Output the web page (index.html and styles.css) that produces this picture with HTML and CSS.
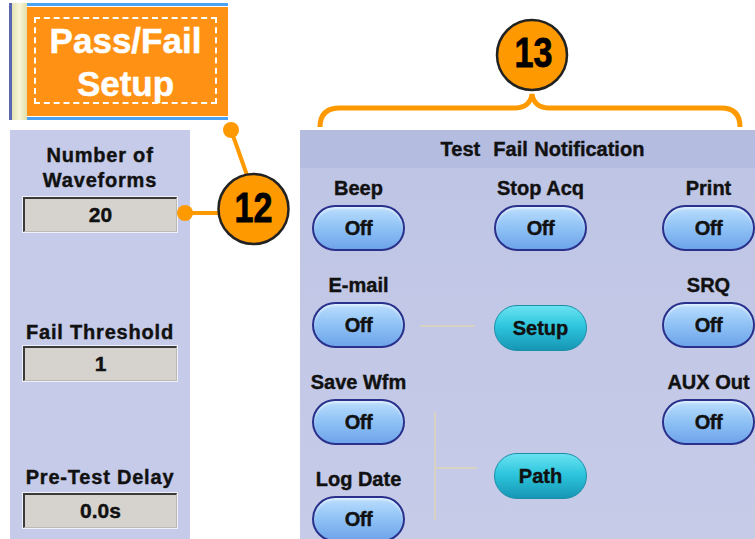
FILE: index.html
```html
<!DOCTYPE html>
<html lang="en">
<head>
  <meta charset="UTF-8">
  <title>Pass/Fail Setup</title>
  <link rel="stylesheet" href="styles.css">
</head>
<body>

  <div class="screen">
    <div class="top">
      <div class="tab">
        <span class="tab-edge"></span>
        <span class="tab-grip"></span>
        <div class="tab-face">
          <div class="tab-orange">
            <div class="tab-dash">Pass/Fail<br>Setup</div>
          </div>
        </div>
      </div>
    </div>

    <div class="main">
      <div class="limits">
        <div class="group">
          <div class="label">Number of<br>Waveforms</div>
          <div class="field"><span class="field-value">20</span></div>
        </div>
        <div class="group group-mid">
          <div class="label">Fail Threshold</div>
          <div class="field field-flush"><span class="field-value">1</span></div>
        </div>
        <div class="group group-last">
          <div class="label">Pre-Test Delay</div>
          <div class="field field-low"><span class="field-value">0.0s</span></div>
        </div>
      </div>

      <div class="notify">
        <div class="notify-head">Test&nbsp; Fail Notification</div>
        <div class="notify-grid">
          <div class="cell c1 r1"><span class="cell-label">Beep</span><span class="pill">Off</span></div>
          <div class="cell c3 r1"><span class="cell-label">Stop Acq</span><span class="pill">Off</span></div>
          <div class="cell c5 r1"><span class="cell-label">Print</span><span class="pill">Off</span></div>

          <div class="cell c1 r2"><span class="cell-label">E-mail</span><span class="pill">Off</span></div>
          <div class="link c2 r2"></div>
          <div class="cell cell-setup c3 r2"><span class="pill pill-teal">Setup</span></div>
          <div class="cell c5 r2"><span class="cell-label">SRQ</span><span class="pill">Off</span></div>

          <div class="cell c1 r3"><span class="cell-label">Save Wfm</span><span class="pill">Off</span></div>
          <div class="tree c2 r34"></div>
          <div class="cell cell-path c3 r34"><span class="pill pill-teal">Path</span></div>
          <div class="cell c5 r3"><span class="cell-label">AUX Out</span><span class="pill">Off</span></div>

          <div class="cell c1 r4"><span class="cell-label">Log Date</span><span class="pill">Off</span></div>
        </div>
      </div>
    </div>

    <!-- callouts drawn over the panels -->
    <svg class="callouts" width="755" height="539" viewBox="0 0 755 539">
      <g fill="#ff9900" stroke="#ff9900">
        <line x1="231" y1="130" x2="248" y2="178" stroke-width="4"/>
        <line x1="185" y1="213" x2="222" y2="213" stroke-width="4"/>
        <circle cx="231" cy="130" r="8" stroke="none"/>
        <circle cx="185" cy="213" r="8" stroke="none"/>
        <path d="M320,127 Q320,108 340,108 L514,108 Q530,108 532,94 Q534,108 550,108 L721,108 Q740,108 740,127" fill="none" stroke-width="5"/>
      </g>
      <circle cx="253.5" cy="209" r="35" fill="#ff9900" stroke="#222" stroke-width="2.5"/>
      <circle cx="532" cy="55" r="35" fill="#ff9900" stroke="#222" stroke-width="2.5"/>
      <text class="num" x="253.5" y="222" textLength="38" lengthAdjust="spacingAndGlyphs">12</text>
      <text class="num" x="533.5" y="67" textLength="38" lengthAdjust="spacingAndGlyphs">13</text>
    </svg>
  </div>

</body>
</html>
```

FILE: styles.css
```css
body { margin: 0; background: #fff; font-family: "Liberation Sans", Arial, sans-serif; color: #111; }
.screen { position: relative; width: 755px; height: 539px; overflow: hidden; }

/* menu tab */
.top { height: 130px; box-sizing: border-box; padding: 3px 0 0 9px; }
.tab { display: flex; height: 117px; }
.tab-edge { width: 3px; background: #5866b4; }
.tab-grip { width: 15px; background: linear-gradient(90deg, #e4e2b4, #f8f6d6 50%, #e2dfaa); }
.tab-face { width: 201px; border-top: 3px solid #4ca2f2; border-bottom: 3px solid #4ca2f2; padding: 1px 0; background: #fff; }
.tab-orange { height: 100%; box-sizing: border-box; background: #ff9214; padding: 10px 11px 12px 7px; }
.tab-dash { height: 100%; box-sizing: border-box; border: 2px dashed #fff; color: #fff; font-weight: bold; font-size: 35px; line-height: 43px; text-align: center; -webkit-text-stroke: 0.5px #fff; }

.main { display: flex; height: 409px; }

/* left column */
.limits { width: 180px; margin-left: 10px; box-sizing: border-box; padding: 13px 12px 0; background: #c5cbe8; display: flex; flex-direction: column; }
.label { font-weight: bold; font-size: 20px; line-height: 25px; letter-spacing: 0.8px; text-align: center; white-space: nowrap; -webkit-text-stroke: 0.4px #111; }
.group-mid { margin-top: 87px; }
.group-last { margin-top: 83px; }
.field { margin-top: 3px; height: 37px; box-sizing: border-box; border: 1px solid #eef0fa; display: flex; }
.field-flush { margin-top: 0; }
.field-low { margin-top: 2px; }
.field-value { flex: 1; background: #d6d3ce; border-top: 2px solid #3a3a3a; border-left: 2px solid #3a3a3a; border-right: 1px solid #bdbab4; border-bottom: 1px solid #bdbab4; font-weight: bold; font-size: 21px; line-height: 31px; text-align: center; -webkit-text-stroke: 0.4px #111; }

/* right panel */
.notify { flex: 1; margin-left: 110px; background: linear-gradient(#bec5e4, #c6cbe8); overflow: hidden; }
.notify-head { height: 38px; background: #b4bce0; padding-left: 30px; font-weight: bold; font-size: 20px; line-height: 38px; text-align: center; word-spacing: 1px; -webkit-text-stroke: 0.4px #111; }
.notify-grid { display: grid; grid-template-columns: 93px 89px 93px 75px 93px; grid-template-rows: repeat(4, 74px); row-gap: 23px; padding: 9px 0 0 12px; }
.c1 { grid-column: 1; } .c2 { grid-column: 2; } .c3 { grid-column: 3; } .c5 { grid-column: 5; }
.r1 { grid-row: 1; } .r2 { grid-row: 2; } .r3 { grid-row: 3; } .r4 { grid-row: 4; } .r34 { grid-row: 3 / 5; }

.cell { display: flex; flex-direction: column; align-items: center; gap: 6px; }
.cell-label { font-weight: bold; font-size: 20px; line-height: 22px; white-space: nowrap; -webkit-text-stroke: 0.4px #111; }
.cell-setup { padding-top: 31px; }
.cell-path { padding-top: 82px; }

.pill { width: 93px; height: 46px; box-sizing: border-box; border-radius: 23px; border: 2px solid #2a318c; background: linear-gradient(#bcdefd, #92c4f6 45%, #6ea4ea); box-shadow: inset 0 2px 2px rgba(255,255,255,0.5); font-weight: bold; font-size: 20px; line-height: 42px; text-align: center; letter-spacing: -0.5px; -webkit-text-stroke: 0.4px #111; }
.pill-teal { border: 1px solid #1a8fa8; background: linear-gradient(#6ae2f2, #2ec6de 45%, #1696b4); box-shadow: none; line-height: 44px; letter-spacing: 0; }

.link { align-self: start; margin: 51px 0 0 15px; width: 55px; height: 2px; background: #d8d2c2; }
.tree { position: relative; align-self: start; margin: 41px 0 0 29px; width: 41px; height: 108px; box-sizing: border-box; border-left: 2px solid #d8d2c2; }
.tree::after { content: ""; position: absolute; left: 0; top: 55px; width: 41px; height: 2px; background: #d8d2c2; }

/* callouts */
.callouts { position: absolute; left: 0; top: 0; pointer-events: none; }
.num { font-family: "Liberation Sans", Arial, sans-serif; font-weight: bold; font-size: 42px; fill: #000; stroke: #000; stroke-width: 0.8; text-anchor: middle; }
```
